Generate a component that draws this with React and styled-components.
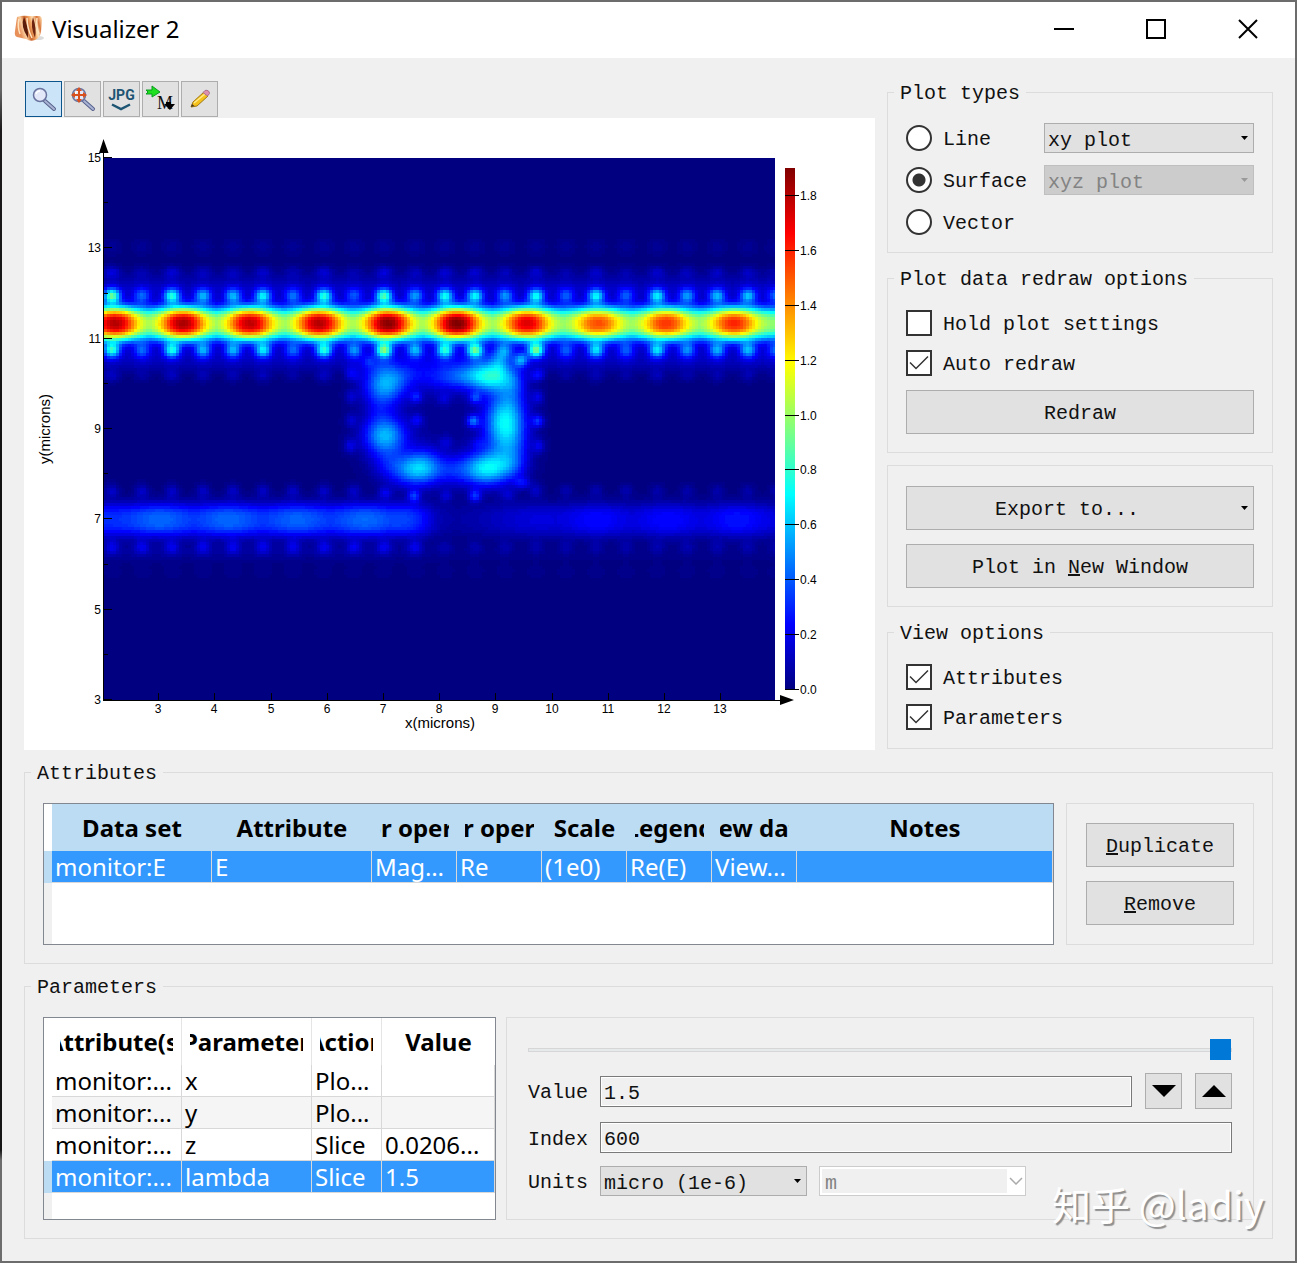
import React, { useState } from "react";
import styled, { createGlobalStyle, css } from "styled-components";

const mono = `"Liberation Mono", "DejaVu Sans Mono", monospace`;
const sans = `"Noto Sans", "Open Sans", sans-serif`;

const GlobalStyle = createGlobalStyle`
  *, *::before, *::after { box-sizing: border-box; }
  body {
    margin: 0;
    background: linear-gradient(#666 0, #666 90px, #1c1a1a 130px, #111 640px, #161616 1150px, #6d6d6d 1160px);
    font-family: ${mono};
    font-size: 20px;
    line-height: 26px;
    color: #111;
  }
  button, input, select { font: inherit; color: inherit; margin: 0; }
`;

const Frame = styled.div`
  min-height: 100vh;
  display: flex;
  flex-direction: column;
  border: 2px solid #6d6c6c;
  border-left-color: transparent;
  background: #f0f0f0;
  background-clip: padding-box;
  position: relative;
`;

const TitleBar = styled.header`
  display: flex;
  align-items: center;
  height: 56px;
  padding: 0 1px 2px 12px;
  background: #fff;
`;

const Title = styled.h1`
  flex: 1;
  margin: 0 0 0 6px;
  font: 400 24px/32px ${sans};
  color: #000;
`;

const CaptionButton = styled.button`
  display: grid;
  place-items: center;
  width: 92px;
  height: 54px;
  padding: 0;
  border: 0;
  background: none;
`;

const Content = styled.main`
  display: flex;
  flex-direction: column;
  gap: 9px;
  padding: 21px 22px 22px;
`;

const Top = styled.div`
  display: grid;
  grid-template-columns: minmax(0, 1fr) 386px;
  gap: 12px;
`;

const PlotColumn = styled.section`
  padding-top: 2px;
`;

const Toolbar = styled.div`
  display: flex;
  gap: 2px;
  padding: 0 0 1px 1px;
`;

const ToolButton = styled.button`
  display: grid;
  place-items: center;
  width: 37px;
  height: 36px;
  padding: 0;
  border: 1px solid ${(p) => (p.$active ? "#0b548c" : "#adadad")};
  background: ${(p) => (p.$active ? "#cce4f7" : "#e1e1e1")};
`;

const Plot = styled.svg`
  display: block;
  width: 100%;
  height: auto;
  background: #fff;
  font-family: "Liberation Sans", Arial, sans-serif;
  font-size: 13px;
`;

const SideColumn = styled.aside`
  display: flex;
  flex-direction: column;
  gap: 12px;
`;

const GroupFrame = styled.fieldset`
  margin: 0;
  padding: 0 6px;
  min-width: 0;
  border: 1px solid #dcdcdc;
`;

const Legend = styled.legend`
  height: 26px;
  padding: 0 6px;
  line-height: 30px;
`;

const Stack = styled.div`
  display: flex;
  flex-direction: column;
  gap: 14px;
  padding: ${(p) => p.$pad || "19px 12px 18px"};
`;

const PlotTypes = styled.div`
  display: grid;
  grid-template-columns: 126px minmax(0, 1fr);
  gap: 12px;
  align-items: center;
  grid-auto-rows: 30px;
  padding: 18px 12px 15px;
`;

const Choice = styled.label`
  display: grid;
  grid-template-columns: 26px auto;
  justify-content: start;
  align-items: center;
  column-gap: 11px;
  height: 26px;
  white-space: nowrap;
`;

const ChoiceText = styled.span`
  height: 26px;
  line-height: 30px;
`;

const Mark = styled.input`
  appearance: none;
  grid-area: 1 / 1;
  width: 26px;
  height: 26px;
  border: 2px solid #333;
  border-radius: ${(p) => (p.type === "radio" ? "50%" : "0")};
  background: #fff;
  ${(p) =>
    p.type === "radio" &&
    css`
      &:checked {
        background: radial-gradient(circle, #333 6px, #fff 7px);
      }
    `}
`;

const Tick = styled.svg`
  grid-area: 1 / 1;
  pointer-events: none;
  z-index: 1;
`;

const SelectBox = styled.div`
  display: grid;
  align-items: center;
  height: 30px;
  border: 1px solid ${(p) => (p.$disabled ? "#bfbfbf" : "#adadad")};
  background: ${(p) => (p.$disabled ? "#ccc" : "#e1e1e1")};
  color: ${(p) => (p.$disabled ? "#838383" : "#111")};
  & > svg {
    grid-area: 1 / 1;
    justify-self: end;
    margin-right: 4px;
    pointer-events: none;
  }
`;

const NativeSelect = styled.select`
  appearance: none;
  grid-area: 1 / 1;
  width: 100%;
  height: 28px;
  padding: 4px 20px 0 3px;
  border: 0;
  border-radius: 0;
  background: none;
  opacity: 1;
`;

const UnitBox = styled.div`
  display: grid;
  grid-template-columns: minmax(0, 1fr) 18px;
  align-items: center;
  height: 30px;
  padding: 2px 0 2px 2px;
  border: 1px solid #ccc;
  background: #fff;
  color: #838383;
`;

const UnitSelect = styled(NativeSelect)`
  grid-area: auto;
  height: 24px;
  padding: 2px 3px 0;
  background: #f0f0f0;
`;

const PushButton = styled.button`
  display: grid;
  grid-template-columns: minmax(0, 1fr) auto;
  column-gap: ${(p) => (p.$menu ? 17 : 0)}px;
  align-items: center;
  height: 44px;
  padding: 0 4px;
  border: 1px solid #adadad;
  background: #e1e1e1;
  text-align: center;
  & > span { padding-top: 4px; }
`;

const Panel = styled.div`
  border: 1px solid #dcdcdc;
`;

const DataRow = styled.div`
  display: grid;
  grid-template-columns: ${(p) => p.$columns};
  gap: ${(p) => p.$gap}px;
  padding: 18px 12px 18px;
`;

const TableFrame = styled.div`
  height: ${(p) => p.$height}px;
  border: 1px solid #828790;
  background: linear-gradient(90deg, #f0f0f0 8px, #fff 8px);
  overflow: hidden;
`;

const Table = styled.table`
  width: 100%;
  table-layout: fixed;
  border-collapse: separate;
  border-spacing: 0;
  font: 400 24px/31px ${sans};
  color: #000;
`;

const HeadCell = styled.th`
  height: 47px;
  padding: 0 8px;
  background: ${(p) => (p.$tinted ? "#bcdcf4" : "#fff")};
  border-right: ${(p) => (p.$ruled ? "1px solid #e5e5e5" : "0")};
  font-weight: 700;
  &:last-child { border-right: 0; }
`;

const HeadText = styled.div`
  display: flex;
  justify-content: center;
  overflow: hidden;
  white-space: nowrap;
`;

const Gutter = styled.td`
  padding: 0;
  background: ${(p) => (p.$selected ? "#bcdcf4" : "#fff")};
`;

const Cell = styled.td`
  height: 32px;
  padding: 0 6px 0 3px;
  overflow: hidden;
  white-space: nowrap;
  text-overflow: ellipsis;
  border-right: 1px solid #d8d8d8;
  border-bottom: 1px solid #d8d8d8;
  background: ${(p) => (p.$selected ? "#3399ff" : p.$alt ? "#f5f5f5" : "#fff")};
  color: ${(p) => (p.$selected ? "#fff" : "#000")};
`;

const Controls = styled(Panel)`
  display: flex;
  flex-direction: column;
  gap: 13px;
  padding: 21px 21px 0;
`;

const Slider = styled.input`
  appearance: none;
  display: block;
  width: 100%;
  height: 21px;
  background: none;
  &::-webkit-slider-runnable-track {
    height: 4px;
    border: 1px solid #d6d6d6;
    background: #e7eaea;
  }
  &::-webkit-slider-thumb {
    appearance: none;
    width: 21px;
    height: 21px;
    margin-top: -10px;
    background: #0078d7;
  }
`;

const Field = styled.div`
  display: flex;
  align-items: center;
  gap: 12px;
  & > label {
    width: 60px;
    padding-top: 4px;
  }
`;

const TextBox = styled.input`
  flex: 1;
  min-width: 0;
  height: 31px;
  padding: 4px 3px 0;
  border: 1px solid #7a7a7a;
  box-shadow: inset 0 0 0 1px #fff;
  background: #f0f0f0;
`;

const StepButton = styled.button`
  display: grid;
  place-items: center;
  width: 37px;
  height: 36px;
  padding: 0;
  margin-left: 1px;
  border: 1px solid #adadad;
  background: #e1e1e1;
`;

const FixedWidth = styled.div`
  width: 207px;
`;

const Watermark = styled.div`
  position: absolute;
  right: 31px;
  bottom: 32px;
  font: 400 39px/52px "Noto Sans CJK SC", sans-serif;
  color: #fff;
  text-shadow: 2px 2px 1px #8f8f8f;
  pointer-events: none;
`;

/* ---------- field map ---------- */

const X0 = 104;
const Y0 = 158;
const CW = 3;
const CH = 3;
const COLS = 224;
const ROWS = 181;
const VMAX = 1.9;
const LEVELS = 96;

const jet = (t) => {
  const c = (k) =>
    Math.round(255 * Math.max(0, Math.min(1, 1.5 - Math.abs(4 * t - k))));
  return `rgb(${c(3)},${c(2)},${c(1)})`;
};

const lobes = [
  [115, 1.8], [183, 1.82], [250, 1.78], [319, 1.8], [388, 1.88],
  [457, 1.9], [527, 1.72], [598, 1.52], [666, 1.57], [734, 1.6],
];
const weak = [
  [160, 0.38], [228, 0.38], [297, 0.37], [365, 0.38], [400, 0.32],
  [535, 0.17], [597, 0.24], [668, 0.24], [737, 0.26],
];
const siteX = [112, 142, 172, 203, 233, 263, 293, 324, 354, 384, 415, 445, 475, 505, 536, 566, 596, 626, 657, 687, 717, 748, 776];
const upper = [0.88, 0.4, 0.74, 0.55, 0.55, 0.66, 0.42, 0.74, 0.36, 0.82, 0.5, 0.7, 0.68, 0.48, 0.7, 0.38, 0.68, 0.38, 0.66, 0.5, 0.56, 0.56, 0.4];
const lower = [0.76, 0.4, 0.72, 0.54, 0.54, 0.66, 0.4, 0.74, 0.48, 0.9, 0.54, 0.72, 0.85, 0.4, 0.9, 0.38, 0.64, 0.38, 0.64, 0.48, 0.54, 0.56, 0.4];

const spots = [
  // ring resonances
  [385, 385, 21, 19, 0.52], [404, 374, 22, 12, 0.16],
  [385, 436, 21, 19, 0.56],
  [416, 470, 27, 16, 0.52], [424, 461, 17, 17, 0.16],
  [485, 470, 27, 16, 0.55], [490, 461, 21, 17, 0.16],
  [505, 423, 20, 29, 0.68],
  [492, 376, 22, 16, 0.6], [466, 376, 26, 13, 0.32], [499, 360, 9, 14, 0.2],
  [437, 375, 24, 18, 0.16], [512, 398, 14, 22, 0.08], [514, 452, 16, 20, 0.16],
  [379, 410, 14, 16, 0.1], [386, 463, 16, 14, 0.1], [452, 470, 14, 14, 0.1],
  [514, 382, 12, 16, 0.16], [378, 366, 18, 10, 0.08], [512, 466, 14, 12, 0.1],
  // lattice points inside and around the ring
  [416, 397, 6, 6, 0.22], [444, 399, 6, 6, 0.12], [475, 398, 6, 6, 0.26],
  [417, 420, 6, 6, 0.18], [473, 421, 6, 6, 0.38], [446, 442, 6, 6, 0.12],
  [478, 443, 7, 5, 0.1], [538, 397, 6, 7, 0.16], [538, 421, 6, 6, 0.28],
  [539, 446, 6, 7, 0.16], [351, 373, 6, 7, 0.12], [351, 397, 6, 7, 0.12],
  [351, 420, 6, 7, 0.12], [350, 446, 6, 7, 0.16], [522, 483, 8, 6, 0.2],
  [385, 493, 7, 6, 0.18], [414, 496, 6, 6, 0.3], [446, 496, 6, 6, 0.14],
  [475, 496, 6, 6, 0.3], [508, 495, 8, 6, 0.12], [369, 361, 6, 6, 0.12],
  [521, 360, 7, 7, 0.42], [539, 374, 6, 6, 0.1],
  [443, 420, 70, 60, 0.04],
];

siteX.forEach((x, i) => {
  spots.push([x, 296, 8, 7, upper[i] - 0.12], [x, 292, 15, 10, 0.15]);
  spots.push([x, 350, 8, 7, lower[i] - 0.12], [x, 355, 15, 11, 0.15]);
  spots.push([x, 272, 8, 6, upper[i] * 0.17], [x, 280, 18, 10, 0.05]);
  const inRing = x > 360 && x < 530;
  if (!inRing) {
    spots.push([x, 376, 8, 6, lower[i] * 0.15], [x, 366, 18, 8, 0.04]);
    spots.push([x, 491, 7, 7, x < 540 ? 0.13 : 0.08]);
  }
  spots.push([x, 247, 9, 8, 0.04]);
  spots.push([x, 547, 7, 7, x < 420 ? 0.16 : 0.07]);
  spots.push([x, 572, 9, 7, 0.025]);
  spots.push([x, 552, 18, 9, x < 420 ? 0.05 : 0.02]);
});

const peak = (list, base, w, p) => (x) => {
  let best = 0;
  list.forEach(([c, a]) => {
    best = Math.max(best, (a - base) * Math.exp(-Math.pow(Math.abs(x - c) / w, p)));
  });
  return base + best;
};
const mainBeam = peak(lobes, 0.96, 22, 2.2);
const leftBeam = peak(weak, 0.27, 26, 2);
const rightBeam = peak(weak, 0.15, 28, 2);

function buildMap() {
  const grid = new Float64Array(COLS * ROWS);
  for (let r = 0; r < ROWS; r++) {
    const y = Y0 + (r + 0.5) * CH;
    for (let c = 0; c < COLS; c++) {
      const x = X0 + (c + 0.5) * CW;
      const left = 1 / (1 + Math.exp((x - 428) / 7));
      const right = 1 / (1 + Math.exp((490 - x) / 16));
      let v = 0;
      const d1 = Math.abs(y - 323.5);
      if (d1 < 45) v += mainBeam(x) * Math.exp(-Math.pow(d1 / 16.8, 2.7));
      const d2 = Math.abs(y - 520);
      if (d2 < 45) {
        const amp = 0.05 + leftBeam(x) * left + (rightBeam(x) - 0.04) * right;
        v += amp * Math.exp(-Math.pow(d2 / 17, 2.8));
      }
      grid[r * COLS + c] = v;
    }
  }
  spots.forEach(([cx, cy, rx, ry, a]) => {
    const c0 = Math.max(0, Math.floor((cx - 3 * rx - X0) / CW));
    const c1 = Math.min(COLS - 1, Math.ceil((cx + 3 * rx - X0) / CW));
    const r0 = Math.max(0, Math.floor((cy - 3 * ry - Y0) / CH));
    const r1 = Math.min(ROWS - 1, Math.ceil((cy + 3 * ry - Y0) / CH));
    for (let r = r0; r <= r1; r++) {
      for (let c = c0; c <= c1; c++) {
        const dx = (X0 + (c + 0.5) * CW - cx) / rx;
        const dy = (Y0 + (r + 0.5) * CH - cy) / ry;
        grid[r * COLS + c] += a * Math.exp(-(dx * dx + dy * dy));
      }
    }
  });
  const paths = Array.from({ length: LEVELS }, () => []);
  const level = (v) => Math.max(0, Math.min(LEVELS - 1, Math.round((v / VMAX) * (LEVELS - 1))));
  for (let r = 0; r < ROWS; r++) {
    let start = 0;
    let current = level(grid[r * COLS]);
    const y = Y0 + r * CH;
    const h = Math.min(CH, 700 - y);
    for (let c = 1; c <= COLS; c++) {
      const next = c < COLS ? level(grid[r * COLS + c]) : -1;
      if (next !== current) {
        if (current > 0) {
          const x = X0 + start * CW;
          const w = Math.min((c - start) * CW, 775 - x);
          paths[current].push(`M${x} ${y}h${w}v${h}h${-w}z`);
        }
        start = c;
        current = next;
      }
    }
  }
  return paths.map((p) => p.join(""));
}

const fieldPaths = buildMap();

function FieldPlot() {
  const yTicks = [15, 13, 11, 9, 7, 5, 3];
  const xTicks = [3, 4, 5, 6, 7, 8, 9, 10, 11, 12, 13];
  const scale = [1.8, 1.6, 1.4, 1.2, 1.0, 0.8, 0.6, 0.4, 0.2, 0.0];
  const px = (v) => Math.round(158.2 + (v - 3) * 56.2);
  const py = (v) => Math.round(158 + (15 - v) * 45.17);
  const pv = (v) => Math.round(689 - v * 274.4);
  return (
    <Plot viewBox="24 118 851 632" role="img" aria-label="Re(E) over x and y in microns">
      <defs>
        <linearGradient id="scale" x1="0" y1="1" x2="0" y2="0">
          {Array.from({ length: 17 }, (_, i) => (
            <stop key={i} offset={i / 16} stopColor={jet(i / 16)} />
          ))}
        </linearGradient>
      </defs>
      <rect x="104" y="158" width="671" height="542" fill={jet(0)} />
      <g shapeRendering="crispEdges">
        {fieldPaths.map((d, i) => d && <path key={i} d={d} fill={jet(i / (LEVELS - 1))} />)}
      </g>
      <rect x="785" y="168" width="10" height="522" fill="url(#scale)" />
      <g stroke="#000" shapeRendering="crispEdges">
        <path d="M103.5 150V700.5H781" fill="none" />
        {yTicks.map((v) => <path key={v} d={`M104 ${py(v) - 0.5}h8`} />)}
        {[14, 12, 10, 8, 6, 4].map((v) => <path key={v} d={`M104 ${py(v) - 0.5}h4`} />)}
        {xTicks.map((v) => <path key={v} d={`M${px(v) + 0.5} 700v-7`} />)}
        {scale.map((v) => <path key={v} d={`M785 ${pv(v) + 0.5}h14`} />)}
      </g>
      <path d="M99 153L103.500 139L108.500 153zM780 695L794 700L780 705z" />
      {yTicks.map((v) => <text key={v} x="101" y={py(v) + 4} textAnchor="end" fontSize="12">{v}</text>)}
      {xTicks.map((v) => <text key={v} x={px(v)} y="713" textAnchor="middle" fontSize="12">{v}</text>)}
      {scale.map((v) => <text key={v} x="800" y={pv(v) + 5} fontSize="12">{v.toFixed(1)}</text>)}
      <text x="440" y="728" textAnchor="middle" fontSize="15">x(microns)</text>
      <text transform="translate(50 429) rotate(-90)" textAnchor="middle" fontSize="15">y(microns)</text>
    </Plot>
  );
}

/* ---------- icons ---------- */

const Logo = () => (
  <svg width="32" height="30" viewBox="0 0 32 30" aria-hidden="true">
    <defs>
      <linearGradient id="flame" x1="0" y1="0" x2="1" y2="-0.3">
        <stop offset="0" stopColor="#e8905a" />
        <stop offset="0.16" stopColor="#fbd0a0" />
        <stop offset="0.3" stopColor="#c8642c" />
        <stop offset="0.46" stopColor="#f5a866" />
        <stop offset="0.58" stopColor="#ffe2b8" />
        <stop offset="0.72" stopColor="#d8763c" />
        <stop offset="0.88" stopColor="#ffd9ac" />
        <stop offset="1" stopColor="#d8743a" />
      </linearGradient>
    </defs>
    <ellipse cx="24" cy="24" rx="6" ry="2" fill="#dcdcdc" />
    <path d="M3 3Q8 1 15 2L26 2Q28 3 28 6L27 18Q26 24 21 26Q16 28 12 25L3 23Q0 22 1 17z" fill="url(#flame)" />
    <path d="M10 3Q6 12 14 24Q15 15 10 3z" fill="#5c1c0a" />
    <path d="M19 3Q16 12 21 24Q23 15 19 3z" fill="#6e240e" />
    <path d="M13 4Q13 14 18 24M23 4Q22 12 25 20M5 5Q3 12 6 20" stroke="#ffe4c0" strokeWidth="1.500" fill="none" />
  </svg>
);

const Lens = ({ target }) => (
  <svg width="30" height="30" viewBox="0 0 30 30" aria-hidden="true">
    <path d="M16 17L25 25" stroke="#56618c" strokeWidth="4" strokeLinecap="round" />
    <path d="M16 17L25 25" stroke="#a9b3d4" strokeWidth="2" strokeLinecap="round" />
    <circle cx="11" cy="11" r="6.500" fill="#e3e8f8" stroke="#69739e" strokeWidth="1.500" />
    <path d="M7 10Q8 7 11 7" stroke="#fff" strokeWidth="1.500" fill="none" />
    {target && (
      <g fill="#d9501f">
        <path d="M10 5h2v12h-2zM5 10h12v2H5z" />
        <path d="M11 3l3 4H8zM11 19l3-4H8zM3 11l4-3v6zM19 11l-4-3v6z" />
      </g>
    )}
  </svg>
);

const JpgText = styled.span`
  font: 700 14px/15px "DejaVu Sans Condensed", "Roboto", sans-serif;
  font-family: "Roboto", sans-serif;
  color: #1d5573;
`;
const JpgFace = styled.span`
  display: grid;
  justify-items: center;
`;
const JpgIcon = () => (
  <JpgFace>
    <JpgText>JPG</JpgText>
    <svg width="20" height="8" viewBox="0 0 20 8" aria-hidden="true">
      <path d="M1 1.500L10 6L19 1.500" fill="none" stroke="#1d5573" strokeWidth="2.500" />
    </svg>
  </JpgFace>
);

const ScriptIcon = () => (
  <svg width="33" height="32" viewBox="0 0 33 32" aria-hidden="true">
    <path d="M2 7h6V3l8 6-8 5v-3H2l2-2z" fill="#1fe01f" stroke="#0a9a20" />
    <text x="13" y="26" fontFamily="Liberation Serif, serif" fontSize="18" fill="#111">M</text>
    <path d="M22 19h5v2h4l-5 6-6-6h2z" fill="#000" />
  </svg>
);

const PencilIcon = () => (
  <svg width="30" height="30" viewBox="0 0 30 30" aria-hidden="true">
    <path d="M6 23L8 18L19 8L23 12L12 22z" fill="#f5c21c" stroke="#a07816" />
    <path d="M9 19L20 10" stroke="#ffe98a" strokeWidth="1.500" />
    <path d="M18 8.500L20 6.500Q22 5.500 24 7.500L24.500 9.500L22.500 12z" fill="#dd8fae" stroke="#a8718a" />
    <path d="M6 23L7 20L9.500 22z" fill="#4a3820" />
  </svg>
);

const SmallArrow = ({ color = "#000" }) => (
  <svg width="9" height="5" viewBox="0 0 9 5" aria-hidden="true">
    <path d="M1 0h7L4.500 4z" fill={color} />
  </svg>
);

const Triangle = ({ up }) => (
  <svg width="24" height="12" viewBox="0 0 24 12" aria-hidden="true">
    <path d={up ? "M0 12L12 0L24 12z" : "M0 0H24L12 12z"} fill="#000" />
  </svg>
);

/* ---------- parts ---------- */

function Group({ title, children }) {
  return (
    <GroupFrame>
      <Legend>{title}</Legend>
      {children}
    </GroupFrame>
  );
}

function Check({ label, initial }) {
  const [on, setOn] = useState(initial);
  return (
    <Choice>
      <Mark type="checkbox" checked={on} onChange={() => setOn(!on)} />
      {on && (
        <Tick width="26" height="26" viewBox="0 0 26 26" aria-hidden="true">
          <path d="M4 12.500L10 18.500L22 6.500" fill="none" stroke="#333" strokeWidth="1.500" />
        </Tick>
      )}
      <ChoiceText>{label}</ChoiceText>
    </Choice>
  );
}

function Radio({ label, value, onPick }) {
  return (
    <Choice>
      <Mark type="radio" name="plot-type" checked={value === label} onChange={() => onPick(label)} />
      <ChoiceText>{label}</ChoiceText>
    </Choice>
  );
}

function Drop({ id, label, text, disabled }) {
  return (
    <SelectBox $disabled={disabled}>
      <NativeSelect id={id} aria-label={label} disabled={disabled}>
        <option>{text}</option>
      </NativeSelect>
      <SmallArrow color={disabled ? "#999" : "#000"} />
    </SelectBox>
  );
}

function DataTable({ height, columns, rows, selected, tinted, ruled }) {
  return (
    <TableFrame $height={height}>
      <Table>
        <colgroup>
          <col width="8" />
          {columns.map(([name, width]) => <col key={name} width={width} />)}
        </colgroup>
        <thead>
          <tr>
            <Gutter />
            {columns.map(([name]) => (
              <HeadCell key={name} scope="col" $tinted={tinted} $ruled={ruled}>
                <HeadText>{name}</HeadText>
              </HeadCell>
            ))}
          </tr>
        </thead>
        <tbody>
          {rows.map((row, r) => (
            <tr key={r}>
              <Gutter $selected={r === selected} />
              {row.map((text, c) => (
                <Cell key={c} $selected={r === selected} $alt={r % 2 === 1}>{text}</Cell>
              ))}
            </tr>
          ))}
        </tbody>
      </Table>
    </TableFrame>
  );
}

const attributeColumns = [
  ["Data set", 160], ["Attribute", 160], ["Vector operation", 85], ["Scalar operation", 85],
  ["Scale", 85], ["Legend", 85], ["View data", 85], ["Notes", undefined],
];
const attributeRows = [["monitor:E", "E", "Magnitude", "Re", "(1e0)", "Re(E)", "View...", ""]];
const parameterColumns = [["Attribute(s)", 130], ["Parameter", 130], ["Action", 70], ["Value", undefined]];
const parameterRows = [
  ["monitor:...", "x", "Plo...", ""],
  ["monitor:...", "y", "Plo...", ""],
  ["monitor:...", "z", "Slice", "0.0206..."],
  ["monitor:...", "lambda", "Slice", "1.5"],
];

export default function App() {
  const [plotType, setPlotType] = useState("Surface");
  return (
    <>
      <GlobalStyle />
      <Frame>
        <TitleBar>
          <Logo />
          <Title>Visualizer 2</Title>
          <CaptionButton aria-label="Minimize">
            <svg width="20" height="20"><path d="M0 10h20" stroke="#000" strokeWidth="2" /></svg>
          </CaptionButton>
          <CaptionButton aria-label="Maximize">
            <svg width="20" height="20"><rect x="1" y="1" width="18" height="18" fill="none" stroke="#000" strokeWidth="2" /></svg>
          </CaptionButton>
          <CaptionButton aria-label="Close">
            <svg width="20" height="20"><path d="M1 1L19 19M19 1L1 19" stroke="#000" strokeWidth="2" /></svg>
          </CaptionButton>
        </TitleBar>
        <Content>
          <Top>
            <PlotColumn>
              <Toolbar>
                <ToolButton $active aria-label="Zoom"><Lens /></ToolButton>
                <ToolButton aria-label="Zoom extent"><Lens target /></ToolButton>
                <ToolButton><JpgIcon /></ToolButton>
                <ToolButton><ScriptIcon /></ToolButton>
                <ToolButton aria-label="Edit"><PencilIcon /></ToolButton>
              </Toolbar>
              <FieldPlot />
            </PlotColumn>
            <SideColumn>
              <Group title="Plot types">
                <PlotTypes>
                  <Radio label="Line" value={plotType} onPick={setPlotType} />
                  <Drop label="Line plot" text="xy plot" />
                  <Radio label="Surface" value={plotType} onPick={setPlotType} />
                  <Drop label="Surface plot" text="xyz plot" disabled />
                  <Radio label="Vector" value={plotType} onPick={setPlotType} />
                </PlotTypes>
              </Group>
              <Group title="Plot data redraw options">
                <Stack>
                  <Check label="Hold plot settings" initial={false} />
                  <Check label="Auto redraw" initial />
                  <PushButton><span>Redraw</span></PushButton>
                </Stack>
              </Group>
              <GroupFrame as="div">
                <Stack $pad="20px 12px 18px">
                  <PushButton $menu><span>Export to...</span><SmallArrow /></PushButton>
                  <PushButton><span>Plot in <u>N</u>ew Window</span></PushButton>
                </Stack>
              </GroupFrame>
              <Group title="View options">
                <Stack>
                  <Check label="Attributes" initial />
                  <Check label="Parameters" initial />
                </Stack>
              </Group>
            </SideColumn>
          </Top>
          <Group title="Attributes">
            <DataRow $columns="minmax(0, 1fr) 188px" $gap={12}>
              <DataTable height={142} columns={attributeColumns} rows={attributeRows} selected={0} tinted />
              <Panel>
                <Stack $pad="19px">
                  <PushButton><span><u>D</u>uplicate</span></PushButton>
                  <PushButton><span><u>R</u>emove</span></PushButton>
                </Stack>
              </Panel>
            </DataRow>
          </Group>
          <Group title="Parameters">
            <DataRow $columns="453px minmax(0, 1fr)" $gap={10}>
              <DataTable height={203} columns={parameterColumns} rows={parameterRows} selected={3} ruled />
              <Controls>
                <Slider type="range" aria-label="Slice position" min="1" max="600" defaultValue="600" />
                <Field>
                  <label htmlFor="value">Value</label>
                  <TextBox id="value" defaultValue="1.5" />
                  <StepButton aria-label="Decrease"><Triangle /></StepButton>
                  <StepButton aria-label="Increase"><Triangle up /></StepButton>
                </Field>
                <Field>
                  <label htmlFor="index">Index</label>
                  <TextBox id="index" defaultValue="600" />
                </Field>
                <Field>
                  <label htmlFor="units">Units</label>
                  <FixedWidth><Drop id="units" text="micro (1e-6)" /></FixedWidth>
                  <FixedWidth>
                    <UnitBox>
                      <UnitSelect aria-label="Base unit" disabled><option>m</option></UnitSelect>
                      <svg width="18" height="8" viewBox="0 0 18 8" aria-hidden="true">
                        <path d="M3 1L9 7L15 1" fill="none" stroke="#aaa" strokeWidth="1.500" />
                      </svg>
                    </UnitBox>
                  </FixedWidth>
                </Field>
              </Controls>
            </DataRow>
          </Group>
        </Content>
        <Watermark>知乎 @ladiy</Watermark>
      </Frame>
    </>
  );
}
